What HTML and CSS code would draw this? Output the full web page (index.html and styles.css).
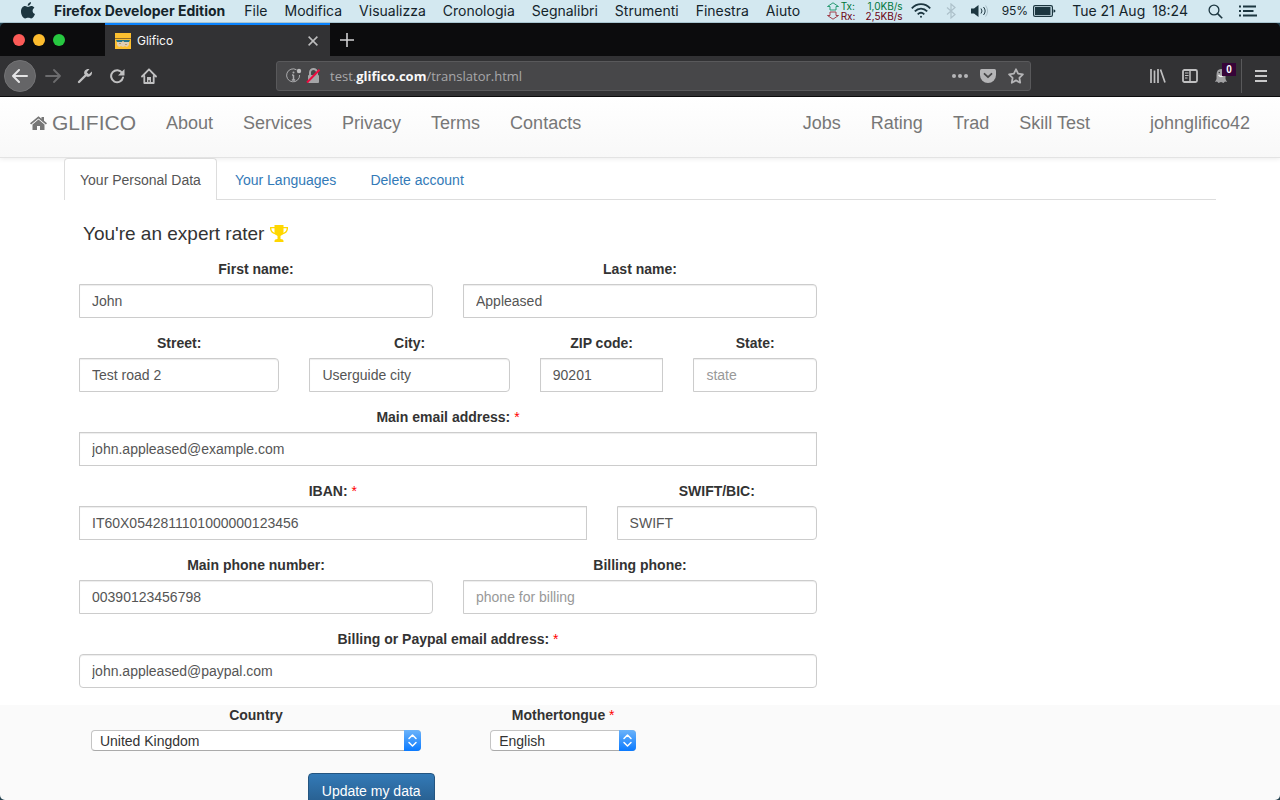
FILE: index.html
```html
<!DOCTYPE html>
<html lang="it">
<head>
<meta charset="utf-8">
<title>Glifico</title>
<link rel="stylesheet" href="styles.css">
</head>
<body>
<header class="menubar">
  <nav class="menus">
    <svg class="apple" width="16" height="18" viewBox="0 0 16 18"><path d="M11 0c.2 1.900-1.500 3.900-3.300 3.800C7.500 2 9.200.2 11 0zM8 4.900c.8 0 1.700-.9 3.200-.9 1.300 0 2.500.7 3.200 1.700-2.700 1.600-2.200 5.300.6 6.400-.7 1.900-2.200 4.400-3.800 4.400-1.100 0-1.600-.7-3-.7s-1.900.7-3 .7C3 16.500 1 12.600 1 9.500 1 6.200 3 4.100 5.100 4.100c1.300 0 2.200.8 2.900.8z"/></svg>
    <strong>Firefox Developer Edition</strong>
    <span>File</span><span>Modifica</span><span>Visualizza</span><span>Cronologia</span><span>Segnalibri</span><span>Strumenti</span><span>Finestra</span><span>Aiuto</span>
  </nav>
  <div class="status">
    <div class="traffic">
      <svg width="14" height="18" viewBox="0 0 14 18" fill="none"><path d="M1.500 4.500 7 .8l5.500 3.700H10V8H4V4.500z" stroke="#2a9b74"/><path d="M1.500 13.500 7 17.200l5.500-3.700H10V10H4v3.500z" stroke="#a0404c"/></svg>
      <span class="tx">Tx:</span><span class="tx rate">1,0KB/s</span>
      <span class="rx">Rx:</span><span class="rx rate">2,5KB/s</span>
    </div>
    <svg class="wifi" width="20" height="16" viewBox="0 0 20 16" fill="none" stroke="#1c3640" stroke-width="1.800"><path d="M.8 5.300C6-.3 14-.3 19.200 5.300M3.800 8.400c3.600-3.800 8.800-3.800 12.400 0M6.700 11.300c2-2 4.600-2 6.600 0"/><circle cx="10" cy="13.800" r="1" fill="#1c3640" stroke="none"/></svg>
    <svg class="bluetooth" width="10" height="16" viewBox="0 0 10 16" fill="none" stroke="#adc1ca" stroke-width="1.200"><path d="m1 4.500 8 7-4 3.500V1l4 3.500-8 7"/></svg>
    <svg class="volume" width="17" height="14" viewBox="0 0 17 14" fill="none" stroke="#1c3640"><path d="M0 4.500h3L7.500 1v12L3 9.500H0z" fill="#1c3640" stroke="none"/><path d="M10 4.500q2 2.500 0 5M12.500 3q3.300 4 0 8" /><path d="M14.600 1.500q4 5.500 0 11" stroke="#9fb5bf" stroke-width=".8"/></svg>
    <span class="percent">95%</span>
    <svg class="battery" width="23" height="12" viewBox="0 0 23 12"><rect x=".6" y=".6" width="18.800" height="10.800" rx="1.500" fill="none" stroke="#1c3640" stroke-width="1.200"/><path d="M2 2h15.500v8H2zM20.500 4.200q2 .6 2 1.800t-2 1.800z" fill="#1c3640"/></svg>
    <span class="date">Tue 21 Aug</span><span class="clock">18:24</span>
    <svg class="spotlight" width="15" height="15" viewBox="0 0 15 15" fill="none" stroke="#1c3640" stroke-width="1.300"><circle cx="6" cy="6" r="4.900"/><path d="m9.600 9.600 4.600 4.600" stroke-width="1.600"/></svg>
    <svg class="list" width="18" height="12" viewBox="0 0 18 12" stroke="#1c3640" stroke-width="2"><path d="M4 1.500h13M4 6h10.500M4 10.500h14M0 1.500h2M0 6h2M0 10.500h2"/></svg>
  </div>
</header>

<div class="window">
  <div class="tabstrip">
    <div class="lights"><i class="close"></i><i class="minimise"></i><i class="maximise"></i></div>
    <div class="tab">
      <svg width="16" height="16" viewBox="0 0 16 16"><path fill="#fdc030" d="M0 0h16v16H0z"/><path stroke="#8f6b28" d="M0 5.500h16"/><path fill="#24758b" d="M1 7h14l-1 2H9L8 8 7 9H2z"/><path fill="#dfceb5" d="M2 9h5l1-1 1 1h5v3l-2 2-2-1-2 1-2-1-2 1-2-2z"/><path fill="#b59a70" d="M4 10h2v1H4zM10 11h2v1h-2z"/></svg>
      <span>Glifico</span>
      <button aria-label="Chiudi scheda"><svg width="10" height="10" viewBox="0 0 10 10" stroke="#bdbdbe" stroke-width="1.500"><path d="m.6.6 8.800 8.800m0-8.800L.6 9.400"/></svg></button>
    </div>
    <button class="newtab" aria-label="Nuova scheda"><svg width="14" height="14" viewBox="0 0 14 14" stroke="#d0d0d1" stroke-width="1.600"><path d="M7 0v14M0 7h14"/></svg></button>
  </div>
  <div class="toolbar">
    <button class="back" aria-label="Indietro"><svg width="16" height="14" viewBox="0 0 16 14" fill="none" stroke="#e4e4e5" stroke-width="2" stroke-linecap="round" stroke-linejoin="round"><path d="M15 7H1m6-6L1 7l6 6"/></svg></button>
    <button class="forward" aria-label="Avanti"><svg width="16" height="14" viewBox="0 0 16 14" fill="none" stroke="#6c6c6e" stroke-width="1.800" stroke-linecap="round" stroke-linejoin="round"><path d="M1 7h14M9 1l6 6-6 6"/></svg></button>
    <button class="tool" aria-label="Strumenti di sviluppo"><svg width="16" height="16" viewBox="0 0 16 16"><path fill="none" stroke="#c0c0c1" stroke-width="2.400" stroke-linecap="round" d="m2 14 7-7"/><path fill="#c0c0c1" d="M12.500 1.100C9 .3 6.500 3 7.300 6l2.600 2.700c3 .8 5.700-1.700 5-5.100l-3 2.600-2.100-2z"/></svg></button>
    <button class="tool" aria-label="Ricarica"><svg width="16" height="16" viewBox="0 0 16 16"><path fill="none" stroke="#c0c0c1" stroke-width="2" stroke-linecap="round" d="M13.200 5A6 6 0 1 0 14 9.500"/><path fill="#c0c0c1" d="M15.500 1v6.500H9z"/></svg></button>
    <button class="tool" aria-label="Pagina iniziale"><svg width="16" height="16" viewBox="0 0 16 16" fill="none" stroke="#c0c0c1" stroke-width="1.800" stroke-linecap="round" stroke-linejoin="round"><path d="M1 8.500 8 1.300l7 7.200M3.300 8v7h9.400V8"/><path fill="#c0c0c1" stroke="none" d="M6 9h4v6H8.600v-3H7.400v3H6z"/></svg></button>
    <div class="urlbar">
      <svg width="16" height="16" viewBox="0 0 16 16" fill="none" stroke="#ababad"><path d="M10.500 1.800A6.500 6.500 0 1 0 13.600 7"/><path d="M7.500 7v5M6 7h1.500M5.800 12h3.400" stroke-width="1.500"/><circle cx="7.500" cy="4.500" r="1" fill="#ababad" stroke="none"/><circle cx="13" cy="3" r="2.200" fill="#bdbdbe" stroke="none"/></svg>
      <svg width="15" height="16" viewBox="0 0 15 16"><path fill="none" stroke="#a5a5a7" stroke-width="2" d="M4 8V4.500a3.500 3.500 0 0 1 7 0V8"/><rect x="2" y="7" width="11" height="8" rx="1" fill="#a5a5a7"/><path d="M1 14.500 13.500 1.800" stroke="#ed0b3f" stroke-width="2"/></svg>
      <span class="url">test.<b>glifico.com</b>/translator.html</span>
      <svg width="16" height="4" viewBox="0 0 16 4" fill="#b5b5b7"><circle cx="2" cy="2" r="2"/><circle cx="8" cy="2" r="2"/><circle cx="14" cy="2" r="2"/></svg>
      <svg width="16" height="14" viewBox="0 0 16 14"><path fill="#b5b5b7" d="M1.500 0h13Q16 0 16 1.500V6A8 8 0 0 1 0 6V1.500Q0 0 1.500 0z"/><path d="m4.500 4.800 3.500 3.400 3.500-3.400" fill="none" stroke="#474749" stroke-width="1.800" stroke-linecap="round" stroke-linejoin="round"/></svg>
      <svg width="16" height="16" viewBox="0 0 16 16"><path fill="none" stroke="#b5b5b7" stroke-width="1.800" stroke-linejoin="round" d="m8 1.300 2.100 4.400 4.800.7-3.500 3.400.8 4.900L8 12.400l-4.200 2.300.8-4.900L1.100 6.400l4.800-.7z"/></svg>
    </div>
    <div class="tools">
      <svg width="16" height="14" viewBox="0 0 16 14" stroke="#c0c0c1" stroke-width="1.700"><path d="M1 0v14M4.500 1.500V14M8 0v14M10.500.5 15 13.500"/></svg>
      <svg width="16" height="14" viewBox="0 0 16 14" fill="none" stroke="#c0c0c1"><rect x="1" y="1" width="14" height="12" rx="1.500" stroke-width="1.800"/><path d="M8 1v12" stroke-width="1.500"/><path d="M3 4h3.500M3 6.500h3.500M3 9h2.500"/></svg>
      <div class="ghost">
        <svg width="14" height="14" viewBox="0 0 14 14"><path fill="#a2a2a4" d="M1 13 2.500 10V6Q2.500 0 7 0t4.500 6v4l1.500 3-2-.5-1.500 1.500L7 13l-2.500 1L3 12.500z"/><path d="M4.500 6q2.500 3 5 0" stroke="#f2f2f2" stroke-width="1.300" fill="none"/><circle cx="5.300" cy="3.500" r=".8" fill="#39393b"/></svg>
        <span class="badge">0</span>
      </div>
    </div>
    <button class="hamburger" aria-label="Apri menu"><svg width="12" height="12" viewBox="0 0 12 12" stroke="#c9c9ca" stroke-width="1.800"><path d="M0 1h12M0 6h12M0 11h12"/></svg></button>
  </div>

  <main class="page">
    <nav class="navbar">
      <a class="brand" href="#"><svg width="17" height="14" viewBox="0 0 17 14" fill="#777"><path d="m0 7.200 8.500-7L11.500 2.700V1h2.500v3.800L17 7.200l-1.100 1.300L8.500 2.400 1.100 8.500z"/><path d="m2.500 8.600 6-5 6 5V14h-4.500v-4H7v4H2.500z"/></svg><span>GLIFICO</span></a>
      <a href="#">About</a><a href="#">Services</a><a href="#">Privacy</a><a href="#">Terms</a><a href="#">Contacts</a>
      <a class="right" href="#">Jobs</a><a href="#">Rating</a><a href="#">Trad</a><a href="#">Skill Test</a><a class="user" href="#">johnglifico42</a>
    </nav>
    <form>
      <div class="sheet">
        <div class="container">
          <nav class="tabs"><a class="active" href="#">Your Personal Data</a><a href="#">Your Languages</a><a href="#">Delete account</a></nav>
          <h1>You're an expert rater <svg width="18" height="17" viewBox="0 0 18 17"><path fill="gold" d="M4.500 0h9v8q-1 2-3 3v3q3 0 3 2v1h-9v-1q0-2 3-2v-3q-2-1-3-3z"/><path fill="none" stroke="gold" stroke-width="1.400" d="M5 2.600H.7V4q.5 4 5.500 5M13 2.600h4.300V4q-.5 4-5.500 5"/></svg></h1>
          <div class="fields">
            <div class="row halves">
              <div class="field"><label for="first">First name:</label><input id="first" class="end" value="John"></div>
              <div class="field"><label for="last">Last name:</label><input id="last" class="end" value="Appleased"></div>
            </div>
            <div class="row address">
              <div class="field"><label for="street">Street:</label><input id="street" class="end" value="Test road 2"></div>
              <div class="field"><label for="city">City:</label><input id="city" class="end" value="Userguide city"></div>
              <div class="field"><label for="zip">ZIP code:</label><input id="zip" value="90201"></div>
              <div class="field"><label for="state">State:</label><input id="state" class="end" placeholder="state"></div>
            </div>
            <div class="row">
              <div class="field"><label for="email">Main email address: <em>*</em></label><input id="email" value="john.appleased@example.com"></div>
            </div>
            <div class="row bank">
              <div class="field"><label for="iban">IBAN: <em>*</em></label><input id="iban" value="IT60X0542811101000000123456"></div>
              <div class="field"><label for="swift">SWIFT/BIC:</label><input id="swift" class="end" value="SWIFT"></div>
            </div>
            <div class="row halves">
              <div class="field"><label for="phone">Main phone number:</label><input id="phone" class="end" value="00390123456798"></div>
              <div class="field"><label for="billphone">Billing phone:</label><input id="billphone" class="end" placeholder="phone for billing"></div>
            </div>
            <div class="row">
              <div class="field"><label for="paypal">Billing or Paypal email address: <em>*</em></label><input id="paypal" class="round" value="john.appleased@paypal.com"></div>
            </div>
          </div>
        </div>
      </div>
      <div class="container">
        <div class="fields">
          <div class="row choices">
            <div class="choice"><label for="country">Country</label><div class="picker country"><select id="country"><option>United Kingdom</option></select><svg width="17" height="21" viewBox="0 0 17 21"><path d="m5 8.500 3.500-3.500L12 8.500m-7 4 3.500 3.500 3.500-3.500"/></svg></div></div>
            <div class="choice"><label for="tongue">Mothertongue <em>*</em></label><div class="picker"><select id="tongue"><option>English</option></select><svg width="17" height="21" viewBox="0 0 17 21"><path d="m5 8.500 3.500-3.500L12 8.500m-7 4 3.500 3.500 3.500-3.500"/></svg></div></div>
            <div class="submit"><button type="button">Update my data</button></div>
          </div>
        </div>
      </div>
    </form>
  </main>
</div>
</body>
</html>
```

FILE: styles.css
```css
* { box-sizing: border-box; }

body {
  margin: 0;
  height: 100vh;
  display: flex;
  flex-direction: column;
  overflow: hidden;
  background: #254351;
  font-family: "Liberation Sans", Arial, sans-serif;
  font-size: 14px;
  line-height: 20px;
  color: #333;
}

button { border: 0; padding: 0; background: none; font: inherit; }
svg { flex: none; }
a { text-decoration: none; }

/* System menu bar */
.menubar {
  height: 23px;
  flex: none;
  display: flex;
  justify-content: space-between;
  align-items: center;
  padding: 0 23px 0 20px;
  background: #d3e8f0;
  border-bottom: 1px solid #a9c5d0;
  color: #14242b;
  font: 14px/22px Inter, sans-serif;
  white-space: nowrap;
}
.menus, .status { display: flex; align-items: center; }
.menus { gap: 17px; }
.menus strong { padding: 0 2px 0 1px; }
.apple { fill: #1c3640; }
.status { font-size: 14px; }
.traffic {
  display: grid;
  grid-template-columns: 14px 17px 44px;
  column-gap: 1px;
  align-items: center;
  font: 10px/10px Inter, sans-serif;
}
.traffic svg { grid-row: span 2; }
.tx { color: #00773a; }
.rx { color: #6b0010; }
.rate { text-align: right; }
.wifi { margin-left: 8px; }
.bluetooth { margin-left: 15px; }
.volume { margin-left: 15px; }
.percent { margin-left: 14px; font-size: 12px; }
.battery { margin-left: 5px; }
.date { margin-left: 16px; }
.clock { margin-left: 7px; }
.spotlight { margin-left: 20px; }
.list { margin-left: 16px; }

/* Browser window */
.window {
  flex: 1;
  min-height: 0;
  display: flex;
  flex-direction: column;
  overflow: hidden;
  border-radius: 5px;
}
.tabstrip {
  height: 33px;
  flex: none;
  display: flex;
  background: #0c0c0d;
}
.lights { width: 105px; display: flex; gap: 8px; align-items: center; padding-left: 13px; }
.lights i { width: 12px; height: 12px; border-radius: 50%; }
.close { background: #fc5b57; }
.minimise { background: #fdbc2e; }
.maximise { background: #27c840; }
.tab {
  width: 225px;
  display: flex;
  align-items: center;
  gap: 6px;
  padding: 0 12px 0 10px;
  background: #323234;
  border-top: 2px solid #0a84ff;
  color: #f9f9fa;
  font: 12px/16px Inter, sans-serif;
}
.tab span { flex: 1; }
.tab button, .newtab { display: flex; align-items: center; }
.newtab { padding: 0 10px; }
.toolbar {
  height: 41px;
  flex: none;
  display: flex;
  align-items: center;
  padding: 0 13px 0 4px;
  background: #323234;
  border-bottom: 1px solid #0c0c0d;
}
.toolbar button { display: flex; align-items: center; justify-content: center; }
.toolbar .back {
  width: 32px;
  height: 32px;
  border-radius: 50%;
  background: #656567;
  border: 1px solid #737375;
}
.forward { width: 32px; }
.tool { width: 32px; }
.toolbar .forward { margin-left: 1px; }
.urlbar {
  height: 30px;
  flex: 1;
  display: flex;
  align-items: center;
  gap: 12px;
  margin: 0 119px 0 111px;
  padding: 0 6px 0 9px;
  background: #474749;
  border: 1px solid #59595b;
  border-radius: 3px;
  color: #a8a8aa;
  font: 13px/18px "Open Sans", sans-serif;
}
.urlbar svg:nth-child(2) { margin-left: -8px; }
.url { flex: 1; margin-left: -3px; }
.url b { font-weight: 700; color: #f9f9fa; }
.tools { display: flex; align-items: center; gap: 16px; }
.ghost { position: relative; display: flex; width: 27px; }
.badge {
  position: absolute;
  top: -6px;
  left: 8px;
  width: 14px;
  height: 13px;
  background: #360438;
  color: #fff;
  font: bold 10px/13px "Liberation Sans", sans-serif;
  text-align: center;
}
.toolbar .hamburger { height: 34px; padding-left: 13px; border-left: 1px solid #59595b; }

/* Site navigation */
.page { flex: 1; min-height: 0; overflow: hidden; background: #fafafa; }
.navbar {
  position: relative;
  min-height: 61px;
  display: flex;
  align-items: center;
  gap: 30px;
  padding: 0 30px 8px;
  background: linear-gradient(#fff, #f8f8f8);
  border-bottom: 1px solid #e3e3e3;
  box-shadow: 0 1px 5px rgba(0, 0, 0, .08);
  font-size: 18px;
  white-space: nowrap;
}
.navbar a { color: #777; }
.navbar .brand { display: flex; align-items: center; gap: 5px; font-size: 21px; }
.navbar .right { margin-left: auto; }
.navbar .user { margin-left: 30px; }

/* Profile form */
.sheet { padding-bottom: 2px; background: #fff; }
.container { width: 90%; margin: 0 auto; }
.tabs { display: flex; gap: 2px; border-bottom: 1px solid #ddd; }
.tabs a {
  padding: 12px 16px 9px;
  color: #337ab7;
}
.tabs .active {
  position: relative;
  margin-bottom: -1px;
  padding: 11px 15px 10px;
  background: #fff;
  border: 1px solid #ddd;
  border-bottom: 0;
  border-radius: 4px 4px 0 0;
  color: #555;
}
h1 {
  margin: 0;
  padding: 23px 19px 14px;
  font-size: 19px;
  line-height: 22px;
  font-weight: 400;
}
h1 svg { vertical-align: -2px; }
.fields { width: 66.6667%; }
.row { display: grid; }
.halves { grid-template-columns: 1fr 1fr; }
.address { grid-template-columns: 3fr 3fr 2fr 2fr; }
.bank { grid-template-columns: 7fr 3fr; }
.choices { grid-template-columns: 5fr 3fr 2fr; }
.field { padding: 0 15px 15px; }
label { display: block; margin-bottom: 5px; text-align: center; font-weight: 700; }
label em { color: #f00; font-style: normal; font-weight: 400; }
.field input {
  display: block;
  width: 100%;
  height: 34px;
  padding: 6px 12px;
  background: #fff;
  border: 1px solid #ccc;
  border-radius: 0;
  box-shadow: inset 0 1px 1px rgba(0, 0, 0, .075);
  color: #555;
  font: inherit;
}
.field .end { border-radius: 0 4px 4px 0; }
.field .round { border-radius: 4px; }
.field input::placeholder { color: #999; }
.choice { display: flex; flex-direction: column; align-items: center; }
.picker { position: relative; width: 146px; height: 21px; }
.country { width: 86%; }
.picker select {
  appearance: none;
  display: block;
  width: 100%;
  height: 21px;
  padding: 0 24px 0 8px;
  background: #fff;
  border: 1px solid #c4c4c4;
  border-bottom-color: #aaa;
  border-radius: 4px;
  color: #333;
  font: inherit;
}
.picker svg {
  position: absolute;
  top: 0;
  right: 0;
  pointer-events: none;
  border-radius: 0 4px 4px 0;
  background: linear-gradient(#6bb3fa, #0a7aff);
  fill: none;
  stroke: #fff;
  stroke-width: 1.500;
  stroke-linecap: round;
  stroke-linejoin: round;
}
.submit { grid-column: 1 / 3; padding-top: 22px; text-align: center; }
.submit button {
  height: 36px;
  padding: 0 13px;
  background: linear-gradient(#337ab7, #265a88);
  border: 1px solid #245580;
  border-radius: 4px;
  color: #fff;
}
```
